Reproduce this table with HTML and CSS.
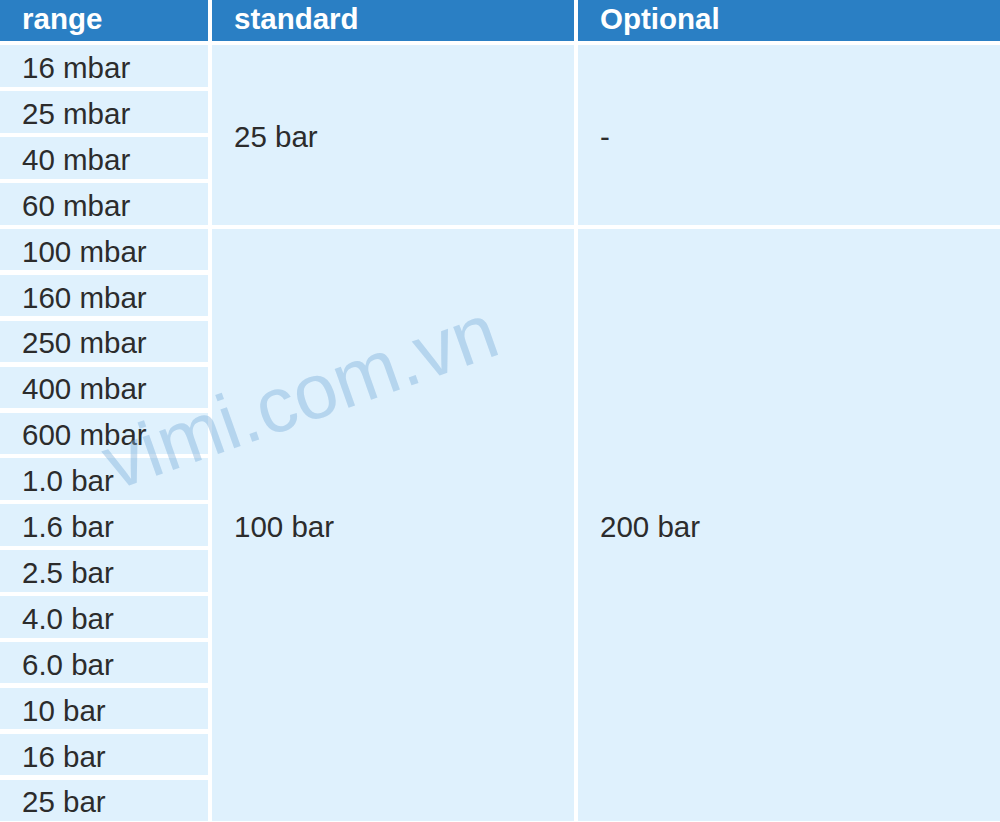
FILE: index.html
```html
<!DOCTYPE html>
<html>
<head>
<meta charset="utf-8">
<link rel="stylesheet" href="styles.css">
</head>
<body>
<div class="table">
  <div class="th c1">range</div>
  <div class="th c2">standard</div>
  <div class="th c3">Optional</div>

  <div class="td c1">16 mbar</div>
  <div class="td c2 span-a">25 bar</div>
  <div class="td c3 span-a">-</div>
  <div class="td c1">25 mbar</div>
  <div class="td c1">40 mbar</div>
  <div class="td c1">60 mbar</div>

  <div class="td c1">100 mbar</div>
  <div class="td c2 span-b">100 bar</div>
  <div class="td c3 span-b">200 bar</div>
  <div class="td c1">160 mbar</div>
  <div class="td c1">250 mbar</div>
  <div class="td c1">400 mbar</div>
  <div class="td c1">600 mbar</div>
  <div class="td c1">1.0 bar</div>
  <div class="td c1">1.6 bar</div>
  <div class="td c1">2.5 bar</div>
  <div class="td c1">4.0 bar</div>
  <div class="td c1">6.0 bar</div>
  <div class="td c1">10 bar</div>
  <div class="td c1">16 bar</div>
  <div class="td c1">25 bar</div>

  <div class="watermark">vimi.com.vn</div>
</div>
</body>
</html>
```
FILE: styles.css
```css
html, body {
  margin: 0;
  padding: 0;
  background: #ffffff;
}
body {
  font-family: "Liberation Sans", Arial, sans-serif;
  width: 1000px;
  height: 822px;
  overflow: hidden;
}
.table {
  position: relative;
  display: grid;
  grid-template-columns: 208px 362px 422px;
  grid-template-rows: 41px repeat(17, 41.5px);
  grid-auto-flow: row dense;
  column-gap: 4px;
  row-gap: 4.4px;
  width: 1000px;
}
.c1 { grid-column: 1; }
.c2 { grid-column: 2; }
.c3 { grid-column: 3; }
.th {
  background: #2a7fc4;
  color: #ffffff;
  font-weight: bold;
  font-size: 29.5px;
  display: flex;
  align-items: center;
  padding-left: 22px;
  padding-bottom: 3px;
}
.td {
  background: #dff1fd;
  color: #2c2c2c;
  font-size: 29.5px;
  display: flex;
  align-items: center;
  padding-left: 22px;
  padding-top: 4px;
}
.span-a { grid-row: 2 / span 4; }
.span-b { grid-row: 6 / span 13; }
.watermark {
  position: absolute;
  left: 106px;
  top: 420px;
  font-size: 78px;
  color: rgba(125, 175, 218, 0.42);
  transform: rotate(-19.5deg);
  transform-origin: left center;
  pointer-events: none;
  white-space: nowrap;
}
```
